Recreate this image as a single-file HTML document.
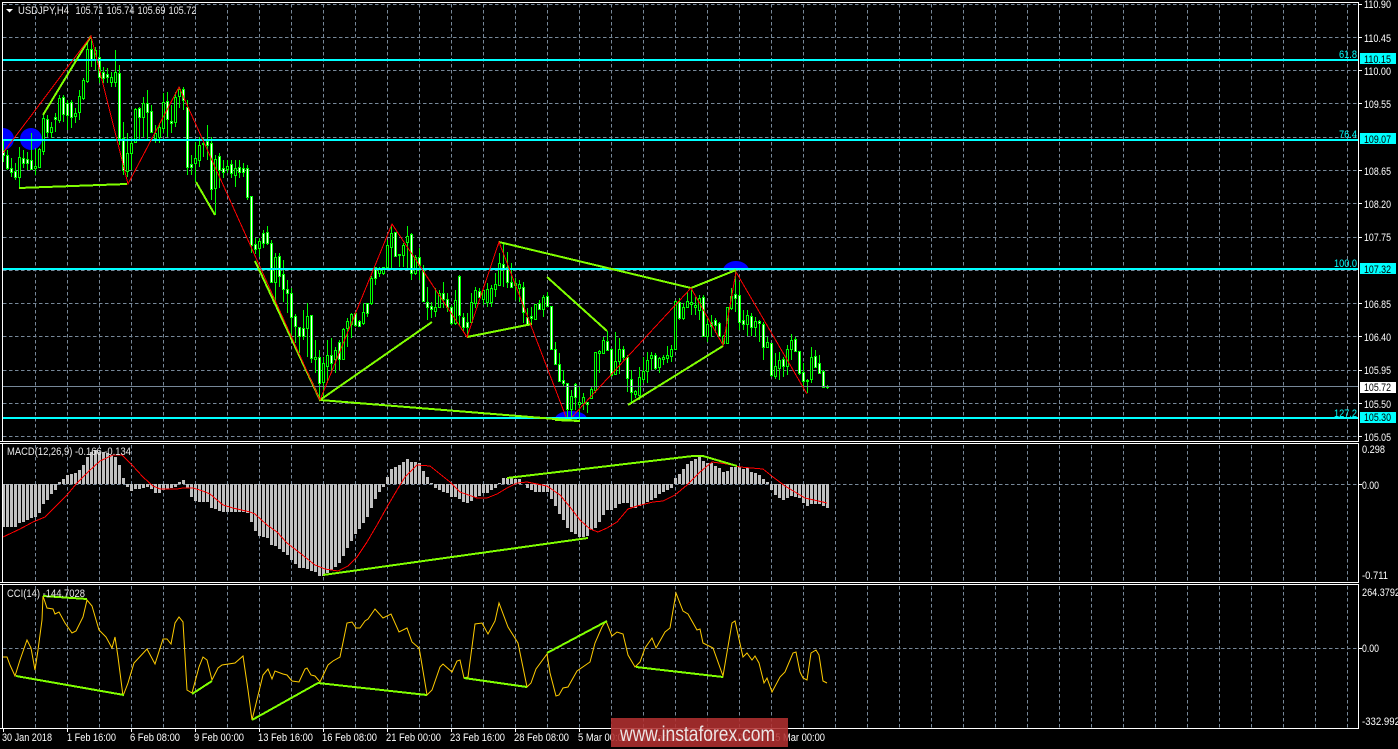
<!DOCTYPE html>
<html><head><meta charset="utf-8"><title>USDJPY,H4</title>
<style>
html,body{margin:0;padding:0;background:#000;width:1398px;height:749px;overflow:hidden}
svg{position:absolute;left:0;top:0;display:block}
text{font-family:"Liberation Sans",sans-serif;font-size:11px;fill:#fff}
.c{fill:#0ff}
.k{fill:#000}
.g{fill:#e8e8e8}
</style></head><body>
<svg width="1398" height="749" viewBox="0 0 1398 749" xmlns="http://www.w3.org/2000/svg">
<rect width="1398" height="749" fill="#000"/>
<!-- grid -->
<g stroke="#778899" fill="none" stroke-dasharray="3.5 2.5" shape-rendering="crispEdges">
<path d="M3 4.5H1358M3 37.5H1358M3 70.5H1358M3 103.5H1358M3 137.5H1358M3 170.5H1358M3 203.5H1358M3 237.5H1358M3 270.5H1358M3 303.5H1358M3 336.5H1358M3 370.5H1358M3 403.5H1358M3 436.5H1358M3 484.5H1358M3 648.5H1358"/>
<path d="M35.5 4V440M67.5 4V440M99.5 4V440M131.5 4V440M163.5 4V440M195.5 4V440M227.5 4V440M259.5 4V440M291.5 4V440M323.5 4V440M355.5 4V440M387.5 4V440M419.5 4V440M451.5 4V440M483.5 4V440M515.5 4V440M547.5 4V440M579.5 4V440M611.5 4V440M643.5 4V440M675.5 4V440M707.5 4V440M739.5 4V440M771.5 4V440M803.5 4V440M835.5 4V440M867.5 4V440M899.5 4V440M931.5 4V440M963.5 4V440M995.5 4V440M1027.5 4V440M1059.5 4V440M1091.5 4V440M1123.5 4V440M1155.5 4V440M1187.5 4V440M1219.5 4V440M1251.5 4V440M1283.5 4V440M1315.5 4V440M1347.5 4V440"/>
<path d="M35.5 445V582M67.5 445V582M99.5 445V582M131.5 445V582M163.5 445V582M195.5 445V582M227.5 445V582M259.5 445V582M291.5 445V582M323.5 445V582M355.5 445V582M387.5 445V582M419.5 445V582M451.5 445V582M483.5 445V582M515.5 445V582M547.5 445V582M579.5 445V582M611.5 445V582M643.5 445V582M675.5 445V582M707.5 445V582M739.5 445V582M771.5 445V582M803.5 445V582M835.5 445V582M867.5 445V582M899.5 445V582M931.5 445V582M963.5 445V582M995.5 445V582M1027.5 445V582M1059.5 445V582M1091.5 445V582M1123.5 445V582M1155.5 445V582M1187.5 445V582M1219.5 445V582M1251.5 445V582M1283.5 445V582M1315.5 445V582M1347.5 445V582"/>
<path d="M35.5 586V728M67.5 586V728M99.5 586V728M131.5 586V728M163.5 586V728M195.5 586V728M227.5 586V728M259.5 586V728M291.5 586V728M323.5 586V728M355.5 586V728M387.5 586V728M419.5 586V728M451.5 586V728M483.5 586V728M515.5 586V728M547.5 586V728M579.5 586V728M611.5 586V728M643.5 586V728M675.5 586V728M707.5 586V728M739.5 586V728M771.5 586V728M803.5 586V728M835.5 586V728M867.5 586V728M899.5 586V728M931.5 586V728M963.5 586V728M995.5 586V728M1027.5 586V728M1059.5 586V728M1091.5 586V728M1123.5 586V728M1155.5 586V728M1187.5 586V728M1219.5 586V728M1251.5 586V728M1283.5 586V728M1315.5 586V728M1347.5 586V728"/>
</g>
<!-- blue -->
<g fill="#00f">
<circle cx="31" cy="139" r="11"/>
<path d="M3 128A11 11 0 0 1 14 139A11 11 0 0 1 3 150Z"/>
<path d="M555 418C557 413 564 411 571 411C578 411 585 413 587 418Z"/>
<path d="M723 269C725 264 730 261 736 261C742 261 747 264 749 269Z"/>
</g>
<!-- wicks -->
<path fill="none" stroke="#0f0" shape-rendering="crispEdges" d="M3.5 140V162M7.5 150V170M11.5 158V177M15.5 163V180M19.5 147V188M23.5 150V168M27.5 152V170M31.5 133V170M35.5 148V175M39.5 148V168M43.5 115V155M47.5 115V137M51.5 122V138M55.5 113V132M59.5 95V123M63.5 95V122M67.5 100V130M71.5 100V128M75.5 108V123M79.5 90V120M83.5 78V100M87.5 43V83M91.5 37V67M95.5 47V70M99.5 50V83M103.5 67V83M107.5 68V83M111.5 72V87M115.5 50V87M119.5 65V145M123.5 122V175M127.5 133V177M131.5 138V170M135.5 108V143M139.5 107V140M143.5 97V137M147.5 90V140M151.5 105V133M155.5 125V143M159.5 123V143M163.5 93V133M167.5 92V137M171.5 105V133M175.5 92V127M179.5 87V108M183.5 87V110M187.5 100V175M191.5 155V175M195.5 142V182M199.5 137V167M203.5 138V157M207.5 125V160M211.5 137V200M215.5 155V215M219.5 153V188M223.5 160V178M227.5 160V173M231.5 160V178M235.5 160V187M239.5 160V178M243.5 163V177M247.5 165V200M251.5 196V253M255.5 238V254M259.5 238V257M263.5 230V248M267.5 226V245M271.5 240V283M275.5 253V305M279.5 253V287M283.5 260V302M287.5 280V313M291.5 288V338M295.5 314V343M299.5 327V353M303.5 310V340M307.5 303V357M311.5 315V363M315.5 340V373M319.5 350V400M323.5 357V398M327.5 340V383M331.5 338V373M335.5 347V373M339.5 340V370M343.5 328V360M347.5 318V347M351.5 313V338M355.5 312V327M359.5 320V327M363.5 303V325M367.5 303V317M371.5 276V305M375.5 267V285M379.5 267V277M383.5 267V275M387.5 240V267M391.5 225V268M395.5 232V256M399.5 254V267M403.5 243V267M407.5 226V270M411.5 233V280M415.5 255V275M419.5 248V280M423.5 265V302M427.5 287V320M431.5 302V318M435.5 288V317M439.5 290V308M443.5 282V308M447.5 293V312M451.5 305V325M455.5 290V325M459.5 275V325M463.5 313V332M467.5 313V335M471.5 293V323M475.5 287V308M479.5 288V298M483.5 290V305M487.5 283V307M491.5 285V307M495.5 273V297M499.5 253V285M503.5 243V287M507.5 252V288M511.5 263V288M515.5 278V300M519.5 280V302M523.5 282V323M527.5 308V325M531.5 307V325M535.5 304V320M539.5 300V310M543.5 295V317M547.5 292V307M551.5 306V350M555.5 342V365M559.5 353V382M563.5 370V387M567.5 383V417M571.5 390V420M575.5 383V410M579.5 387V417M583.5 393V410M587.5 402V413M591.5 387V398M595.5 352V393M599.5 350V373M603.5 337V353M607.5 331V350M611.5 348V377M615.5 332V375M619.5 338V374M623.5 346V360M627.5 355V392M631.5 370V402M635.5 390V398M639.5 367V400M643.5 357V383M647.5 352V383M651.5 352V370M655.5 353V370M659.5 357V373M663.5 355V365M667.5 346V363M671.5 345V362M675.5 300V350M679.5 298V320M683.5 303V320M687.5 292V308M691.5 290V315M695.5 297V315M699.5 295V320M703.5 295V337M707.5 317V342M711.5 315V337M715.5 318V333M719.5 322V337M723.5 335V345M727.5 307V344M731.5 288V310M735.5 270V312M739.5 282V330M743.5 310V330M747.5 310V336M751.5 313V336M755.5 317V337M759.5 320V342M763.5 322V360M767.5 337V348M771.5 343V377M775.5 353V379M779.5 352V380M783.5 357V377M787.5 345V375M791.5 334V360M795.5 337V352M799.5 351V375M803.5 363V389M807.5 379V393M811.5 347V383M815.5 350V368M819.5 355V373M823.5 370V388M827.5 385V389"/>
<!-- bull bodies -->
<path fill="#000" stroke="#0f0" shape-rendering="crispEdges" d="M18.5 157.5h2v20h-2zM34.5 166.5h2v2h-2zM38.5 149.5h2v18h-2zM42.5 118.5h2v33h-2zM50.5 127.5h2v5h-2zM58.5 98.5h2v22h-2zM74.5 113.5h2v3h-2zM78.5 96.5h2v16h-2zM82.5 80.5h2v18h-2zM86.5 49.5h2v32h-2zM94.5 50.5h2v10h-2zM110.5 77.5h2v5h-2zM114.5 72.5h2v10h-2zM126.5 153.5h2v18h-2zM130.5 143.5h2v10h-2zM134.5 109.5h2v33h-2zM142.5 103.5h2v14h-2zM154.5 133.5h2v5h-2zM158.5 127.5h2v10h-2zM162.5 102.5h2v26h-2zM174.5 97.5h2v25h-2zM178.5 89.5h2v7h-2zM194.5 158.5h2v5h-2zM198.5 145.5h2v15h-2zM202.5 143.5h2v1h-2zM214.5 159.5h2v29h-2zM226.5 166.5h2v3h-2zM234.5 168.5h2v7h-2zM258.5 241.5h2v7h-2zM274.5 257.5h2v25h-2zM306.5 316.5h2v12h-2zM314.5 357.5h2v2h-2zM322.5 363.5h2v19h-2zM326.5 355.5h2v11h-2zM334.5 350.5h2v9h-2zM342.5 329.5h2v30h-2zM346.5 321.5h2v7h-2zM350.5 314.5h2v10h-2zM362.5 312.5h2v11h-2zM370.5 278.5h2v25h-2zM378.5 269.5h2v4h-2zM382.5 267.5h2v6h-2zM386.5 245.5h2v22h-2zM390.5 233.5h2v14h-2zM402.5 245.5h2v10h-2zM406.5 236.5h2v6h-2zM414.5 257.5h2v16h-2zM434.5 307.5h2v4h-2zM438.5 293.5h2v14h-2zM454.5 300.5h2v23h-2zM470.5 302.5h2v20h-2zM474.5 290.5h2v13h-2zM482.5 290.5h2v9h-2zM486.5 289.5h2v13h-2zM490.5 288.5h2v14h-2zM494.5 284.5h2v5h-2zM498.5 263.5h2v22h-2zM514.5 283.5h2v2h-2zM518.5 284.5h2v4h-2zM534.5 304.5h2v15h-2zM542.5 297.5h2v12h-2zM570.5 396.5h2v13h-2zM578.5 402.5h2v2h-2zM582.5 397.5h2v6h-2zM590.5 389.5h2v9h-2zM594.5 352.5h2v38h-2zM598.5 351.5h2v2h-2zM602.5 340.5h2v13h-2zM614.5 361.5h2v13h-2zM618.5 349.5h2v12h-2zM634.5 391.5h2v3h-2zM638.5 377.5h2v18h-2zM642.5 371.5h2v8h-2zM646.5 360.5h2v11h-2zM650.5 355.5h2v3h-2zM658.5 358.5h2v9h-2zM662.5 357.5h2v2h-2zM666.5 355.5h2v3h-2zM670.5 349.5h2v7h-2zM674.5 301.5h2v48h-2zM682.5 307.5h2v11h-2zM686.5 301.5h2v6h-2zM690.5 302.5h2v2h-2zM694.5 305.5h2v2h-2zM698.5 298.5h2v12h-2zM706.5 324.5h2v12h-2zM722.5 336.5h2v7h-2zM726.5 307.5h2v36h-2zM730.5 296.5h2v12h-2zM746.5 315.5h2v9h-2zM754.5 321.5h2v6h-2zM766.5 342.5h2v5h-2zM774.5 366.5h2v10h-2zM778.5 360.5h2v8h-2zM786.5 349.5h2v17h-2zM790.5 340.5h2v9h-2zM810.5 357.5h2v22h-2z"/>
<!-- bear bodies -->
<path fill="#fff" stroke="#0f0" shape-rendering="crispEdges" d="M2.5 150.5h2v5h-2zM6.5 155.5h2v13h-2zM10.5 168.5h2v4h-2zM14.5 171.5h2v6h-2zM22.5 158.5h2v5h-2zM26.5 159.5h2v4h-2zM30.5 160.5h2v9h-2zM46.5 119.5h2v13h-2zM54.5 117.5h2v2h-2zM62.5 97.5h2v17h-2zM66.5 103.5h2v12h-2zM70.5 102.5h2v15h-2zM90.5 49.5h2v11h-2zM98.5 57.5h2v20h-2zM102.5 72.5h2v6h-2zM106.5 74.5h2v3h-2zM118.5 73.5h2v65h-2zM122.5 138.5h2v32h-2zM138.5 108.5h2v9h-2zM146.5 103.5h2v9h-2zM150.5 111.5h2v21h-2zM166.5 101.5h2v18h-2zM170.5 121.5h2v2h-2zM182.5 89.5h2v11h-2zM186.5 107.5h2v60h-2zM190.5 164.5h2v3h-2zM206.5 141.5h2v4h-2zM210.5 143.5h2v46h-2zM218.5 156.5h2v14h-2zM222.5 168.5h2v4h-2zM230.5 164.5h2v9h-2zM238.5 167.5h2v5h-2zM242.5 168.5h2v4h-2zM246.5 168.5h2v29h-2zM250.5 196.5h2v49h-2zM254.5 244.5h2v5h-2zM262.5 233.5h2v10h-2zM266.5 232.5h2v11h-2zM270.5 243.5h2v39h-2zM278.5 256.5h2v20h-2zM282.5 274.5h2v15h-2zM286.5 289.5h2v4h-2zM290.5 293.5h2v24h-2zM294.5 316.5h2v10h-2zM298.5 327.5h2v9h-2zM302.5 328.5h2v8h-2zM310.5 315.5h2v43h-2zM318.5 357.5h2v26h-2zM330.5 355.5h2v8h-2zM338.5 342.5h2v17h-2zM354.5 313.5h2v12h-2zM358.5 321.5h2v5h-2zM366.5 303.5h2v10h-2zM374.5 267.5h2v11h-2zM394.5 232.5h2v24h-2zM398.5 254.5h2v1h-2zM410.5 234.5h2v39h-2zM418.5 257.5h2v8h-2zM422.5 268.5h2v33h-2zM426.5 302.5h2v5h-2zM430.5 306.5h2v3h-2zM442.5 293.5h2v6h-2zM446.5 299.5h2v8h-2zM450.5 307.5h2v16h-2zM458.5 276.5h2v39h-2zM462.5 317.5h2v10h-2zM466.5 322.5h2v5h-2zM478.5 291.5h2v6h-2zM502.5 264.5h2v4h-2zM506.5 267.5h2v15h-2zM510.5 282.5h2v5h-2zM522.5 287.5h2v25h-2zM526.5 317.5h2v8h-2zM530.5 316.5h2v2h-2zM538.5 303.5h2v6h-2zM546.5 296.5h2v10h-2zM550.5 306.5h2v43h-2zM554.5 349.5h2v15h-2zM558.5 364.5h2v17h-2zM562.5 380.5h2v3h-2zM566.5 383.5h2v26h-2zM574.5 384.5h2v13h-2zM586.5 402.5h2v2h-2zM606.5 341.5h2v9h-2zM610.5 349.5h2v26h-2zM622.5 349.5h2v8h-2zM626.5 357.5h2v21h-2zM630.5 379.5h2v13h-2zM654.5 355.5h2v13h-2zM678.5 302.5h2v16h-2zM702.5 297.5h2v39h-2zM710.5 322.5h2v4h-2zM714.5 320.5h2v5h-2zM718.5 323.5h2v13h-2zM734.5 294.5h2v4h-2zM738.5 295.5h2v27h-2zM742.5 320.5h2v4h-2zM750.5 316.5h2v11h-2zM758.5 321.5h2v2h-2zM762.5 324.5h2v23h-2zM770.5 343.5h2v32h-2zM782.5 359.5h2v7h-2zM794.5 339.5h2v12h-2zM798.5 351.5h2v22h-2zM802.5 372.5h2v9h-2zM806.5 380.5h2v1h-2zM814.5 356.5h2v11h-2zM818.5 363.5h2v10h-2zM822.5 371.5h2v16h-2zM826.5 386.5h2v1h-2z"/>
<!-- levels -->
<g shape-rendering="crispEdges">
<path d="M3 386.5H1358" stroke="#778899" fill="none"/>
<path d="M3 60H1358M3 140H1358M3 269H1358M3 418H1358" stroke="#0ff" stroke-width="2" fill="none"/>
</g>
<!-- main green -->
<g fill="none" stroke="#80ff00" stroke-width="2" shape-rendering="crispEdges">
<path d="M19 188L127 184"/>
<path d="M43 115L91 36"/>
<path d="M196 182L215 215"/>
<path d="M255 261L320 400L432 322"/>
<path d="M320 400L580 421L555 420"/>
<path d="M467 337L532 324"/>
<path d="M499 242L691 288L736 270"/>
<path d="M547 277L607 331"/>
<path d="M628 405L723 346"/>
</g>
<!-- main red -->
<path fill="none" stroke="#f00" shape-rendering="crispEdges" d="M3 153L91 36L128 184L179 87L320 400L392 224L467 337L499 242L566 417M572 417L691 288L723 345L736 272L807 394"/>
<!-- MACD hist -->
<path fill="none" stroke="#c0c0c0" stroke-width="3" shape-rendering="crispEdges" d="M3.5 484V527M7.5 484V527M11.5 484V527M15.5 484V527M19.5 484V523M23.5 484V522M27.5 484V520M31.5 484V518M35.5 484V517M39.5 484V513M43.5 484V504M47.5 484V500M51.5 484V494M55.5 484V490M59.5 484V482M63.5 484V479M67.5 484V475M71.5 484V474M75.5 484V473M79.5 484V470M83.5 484V465M87.5 484V457M91.5 484V452M95.5 484V450M99.5 484V452M103.5 484V452M107.5 484V453M111.5 484V455M115.5 484V457M119.5 484V465M123.5 484V478M127.5 484V487M131.5 484V491M135.5 484V489M139.5 484V489M143.5 484V488M147.5 484V487M151.5 484V489M155.5 484V493M159.5 484V493M163.5 484V490M167.5 484V489M171.5 484V488M175.5 484V487M179.5 484V482M183.5 484V480M187.5 484V488M191.5 484V497M195.5 484V501M199.5 484V502M203.5 484V502M207.5 484V502M211.5 484V508M215.5 484V509M219.5 484V511M223.5 484V512M227.5 484V512M231.5 484V512M235.5 484V512M239.5 484V512M243.5 484V512M247.5 484V513M251.5 484V522M255.5 484V531M259.5 484V536M263.5 484V537M267.5 484V538M271.5 484V545M275.5 484V546M279.5 484V549M283.5 484V552M287.5 484V555M291.5 484V560M295.5 484V564M299.5 484V568M303.5 484V568M307.5 484V569M311.5 484V571M315.5 484V572M319.5 484V576M323.5 484V576M327.5 484V573M331.5 484V570M335.5 484V567M339.5 484V563M343.5 484V556M347.5 484V548M351.5 484V541M355.5 484V534M359.5 484V529M363.5 484V523M367.5 484V517M371.5 484V508M375.5 484V499M379.5 484V492M383.5 484V487M387.5 484V477M391.5 484V469M395.5 484V467M399.5 484V465M403.5 484V462M407.5 484V459M411.5 484V462M415.5 484V462M419.5 484V463M423.5 484V471M427.5 484V477M431.5 484V483M435.5 484V488M439.5 484V490M443.5 484V492M447.5 484V493M451.5 484V497M455.5 484V497M459.5 484V499M463.5 484V502M467.5 484V503M471.5 484V501M475.5 484V497M479.5 484V496M483.5 484V493M487.5 484V493M491.5 484V490M495.5 484V488M499.5 484V483M503.5 484V478M507.5 484V478M511.5 484V478M515.5 484V479M519.5 484V479M523.5 484V484M527.5 484V488M531.5 484V490M535.5 484V492M539.5 484V492M543.5 484V492M547.5 484V492M551.5 484V499M555.5 484V506M559.5 484V514M563.5 484V520M567.5 484V528M571.5 484V532M575.5 484V534M579.5 484V537M583.5 484V537M587.5 484V536M591.5 484V530M595.5 484V528M599.5 484V522M603.5 484V515M607.5 484V510M611.5 484V510M615.5 484V508M619.5 484V504M623.5 484V503M627.5 484V503M631.5 484V507M635.5 484V508M639.5 484V506M643.5 484V504M647.5 484V502M651.5 484V500M655.5 484V498M659.5 484V494M663.5 484V492M667.5 484V490M671.5 484V488M675.5 484V478M679.5 484V474M683.5 484V469M687.5 484V464M691.5 484V461M695.5 484V459M699.5 484V457M703.5 484V461M707.5 484V463M711.5 484V463M715.5 484V466M719.5 484V468M723.5 484V472M727.5 484V471M731.5 484V467M735.5 484V467M739.5 484V467M743.5 484V469M747.5 484V468M751.5 484V472M755.5 484V473M759.5 484V475M763.5 484V479M767.5 484V482M771.5 484V490M775.5 484V495M779.5 484V498M783.5 484V500M787.5 484V498M791.5 484V496M795.5 484V497M799.5 484V498M803.5 484V503M807.5 484V506M811.5 484V504M815.5 484V504M819.5 484V504M823.5 484V506M827.5 484V508"/>
<path fill="none" stroke="#f00" shape-rendering="crispEdges" d="M3 537L20 529L33 522L45 517L55 507L67 495L77 483L88 472L100 461L113 455L122 455L132 465L143 477L153 486L160 489L177 489L183 488L193 488L203 491L210 494L223 505L233 508L250 512L255 514L267 525L277 532L287 543L300 553L315 565L325 569L338 571L348 566L357 557L367 542L377 525L387 507L397 490L405 477L417 465L430 466L440 474L450 482L460 492L477 498L487 498L497 494L507 488L517 483L527 482L547 486L560 495L570 507L580 520L590 529L598 532L607 528L617 522L628 509L637 506L653 502L663 501L675 495L687 485L700 472L712 462L727 464L740 467L763 469L773 477L785 486L795 492L805 498L827 503"/>
<g fill="none" stroke="#80ff00" stroke-width="2" shape-rendering="crispEdges">
<path d="M323 575L588 538"/>
<path d="M507 478L693 456L703 456L737 466"/>
</g>
<!-- CCI -->
<path fill="none" stroke="#fc0" d="M3 657L7 657L10 665L15 676L20 660L27 640L31 648L35 670L38 650L42 620L43 596L47 608L53 609L55 614L59 612L65 623L72 633L76 631L83 617L87 600L92 606L99 630L106 637L112 648L115 637L118 657L123 696L128 683L134 663L147 649L155 664L163 639L167 639L171 644L175 623L179 617L183 622L187 690L192 693L199 667L203 657L207 660L212 680L218 668L222 665L235 663L243 656L248 690L252 720L263 675L268 669L272 679L275 671L283 674L287 675L292 681L299 682L305 669L307 668L311 675L315 676L320 682L328 665L333 661L340 657L347 623L352 622L356 628L360 628L365 621L368 619L375 609L383 618L391 614L399 632L407 628L412 642L419 648L420 653L427 695L432 690L440 667L443 664L452 672L457 661L460 660L464 678L468 677L475 624L482 623L488 634L495 621L499 603L508 627L518 643L527 687L531 683L536 669L547 654L550 673L556 696L559 695L563 688L568 687L577 671L590 662L595 643L602 627L606 621L612 636L617 632L623 634L628 655L635 667L640 662L645 648L652 638L656 648L665 632L670 628L676 593L683 611L688 614L697 630L700 629L703 643L713 648L723 676L732 623L735 621L743 657L747 653L752 660L755 656L759 663L764 683L767 678L772 692L780 677L785 672L793 653L796 652L800 672L803 678L807 680L811 653L816 650L819 655L823 681L827 683"/>
<g fill="none" stroke="#80ff00" stroke-width="2" shape-rendering="crispEdges">
<path d="M43 596L87 599"/>
<path d="M16 676L124 695"/>
<path d="M192 694L212 681"/>
<path d="M252 720L318 683L427 695"/>
<path d="M464 678L527 687"/>
<path d="M547 653L607 621"/>
<path d="M636 667L723 677"/>
</g>
<!-- frames -->
<g fill="none" stroke="#fff" shape-rendering="crispEdges">
<path d="M2.5 441.5V2.5H1358.5V441.5"/>
<path d="M0 441.5H1359"/>
<path d="M0 443.5H1359M2.5 443.5V582.5M1358.5 443.5V582.5M0 582.5H1359"/>
<path d="M0 584.5H1359M2.5 584.5V728.5M1358.5 584.5V728.5M0 728.5H1359"/>
<path d="M1359 4.5h3M1359 37.5h3M1359 70.5h3M1359 103.5h3M1359 170.5h3M1359 203.5h3M1359 237.5h3M1359 303.5h3M1359 336.5h3M1359 370.5h3M1359 403.5h3M1359 436.5h3M1359 484.5h3M1359 648.5h3"/>
<path d="M3.5 729v3M67.5 729v3M131.5 729v3M195.5 729v3M259.5 729v3M323.5 729v3M387.5 729v3M451.5 729v3M515.5 729v3M579.5 729v3M643.5 729v3M707.5 729v3M771.5 729v3"/>
</g>
<!-- title -->
<path d="M6 9h7l-3.5 3.5z" fill="#fff"/>
<text class="g" x="18" y="14" textLength="51" lengthAdjust="spacingAndGlyphs">USDJPY,H4</text>
<text class="g" x="75.5" y="14" textLength="28" lengthAdjust="spacingAndGlyphs">105.71</text>
<text class="g" x="106.5" y="14" textLength="28" lengthAdjust="spacingAndGlyphs">105.74</text>
<text class="g" x="137.5" y="14" textLength="28" lengthAdjust="spacingAndGlyphs">105.69</text>
<text class="g" x="168.5" y="14" textLength="28" lengthAdjust="spacingAndGlyphs">105.72</text>
<text class="g" x="7" y="455" textLength="124" lengthAdjust="spacingAndGlyphs">MACD(12,26,9) -0.166 -0.134</text>
<text class="g" x="7" y="597" textLength="78" lengthAdjust="spacingAndGlyphs">CCI(14) -144.7028</text>
<!-- level labels -->
<text class="c" x="1339" y="58" textLength="18" lengthAdjust="spacingAndGlyphs">61.8</text>
<text class="c" x="1339" y="138" textLength="18" lengthAdjust="spacingAndGlyphs">76.4</text>
<text class="c" x="1334" y="267" textLength="23" lengthAdjust="spacingAndGlyphs">100.0</text>
<text class="c" x="1334" y="417" textLength="23" lengthAdjust="spacingAndGlyphs">127.2</text>
<!-- price boxes -->
<rect x="1360" y="53" width="36" height="11" fill="#0ff"/>
<rect x="1360" y="133" width="36" height="11" fill="#0ff"/>
<rect x="1360" y="263" width="36" height="11" fill="#0ff"/>
<rect x="1360" y="382" width="36" height="11" fill="#fff"/>
<rect x="1360" y="412" width="36" height="11" fill="#0ff"/>
<!-- price axis -->
<g>
<text x="1364" y="8" textLength="27" lengthAdjust="spacingAndGlyphs">110.90</text>
<text x="1364" y="42" textLength="27" lengthAdjust="spacingAndGlyphs">110.45</text>
<text class="k" x="1364" y="63" textLength="27" lengthAdjust="spacingAndGlyphs">110.15</text>
<text x="1364" y="75" textLength="27" lengthAdjust="spacingAndGlyphs">110.00</text>
<text x="1364" y="108" textLength="27" lengthAdjust="spacingAndGlyphs">109.55</text>
<text class="k" x="1364" y="143" textLength="27" lengthAdjust="spacingAndGlyphs">109.07</text>
<text x="1364" y="175" textLength="27" lengthAdjust="spacingAndGlyphs">108.65</text>
<text x="1364" y="208" textLength="27" lengthAdjust="spacingAndGlyphs">108.20</text>
<text x="1364" y="241" textLength="27" lengthAdjust="spacingAndGlyphs">107.75</text>
<text class="k" x="1364" y="273" textLength="27" lengthAdjust="spacingAndGlyphs">107.32</text>
<text x="1364" y="308" textLength="27" lengthAdjust="spacingAndGlyphs">106.85</text>
<text x="1364" y="341" textLength="27" lengthAdjust="spacingAndGlyphs">106.40</text>
<text x="1364" y="374" textLength="27" lengthAdjust="spacingAndGlyphs">105.95</text>
<text class="k" x="1364" y="391" textLength="27" lengthAdjust="spacingAndGlyphs">105.72</text>
<text x="1364" y="408" textLength="27" lengthAdjust="spacingAndGlyphs">105.50</text>
<text class="k" x="1364" y="421" textLength="27" lengthAdjust="spacingAndGlyphs">105.30</text>
<text x="1364" y="441" textLength="27" lengthAdjust="spacingAndGlyphs">105.05</text>
<text x="1362" y="453" textLength="23" lengthAdjust="spacingAndGlyphs">0.298</text>
<text x="1362" y="489" textLength="17" lengthAdjust="spacingAndGlyphs">0.00</text>
<text x="1362" y="579" textLength="26" lengthAdjust="spacingAndGlyphs">-0.711</text>
<text x="1362" y="596" textLength="38" lengthAdjust="spacingAndGlyphs">264.3792</text>
<text x="1362" y="652" textLength="17" lengthAdjust="spacingAndGlyphs">0.00</text>
<text x="1362" y="725" textLength="38" lengthAdjust="spacingAndGlyphs">-332.992</text>
</g>
<!-- time axis -->
<g>
<text x="2" y="741" textLength="50" lengthAdjust="spacingAndGlyphs">30 Jan 2018</text>
<text x="67" y="741" textLength="49" lengthAdjust="spacingAndGlyphs">1 Feb 16:00</text>
<text x="130" y="741" textLength="50" lengthAdjust="spacingAndGlyphs">6 Feb 08:00</text>
<text x="194" y="741" textLength="50" lengthAdjust="spacingAndGlyphs">9 Feb 00:00</text>
<text x="258" y="741" textLength="55" lengthAdjust="spacingAndGlyphs">13 Feb 16:00</text>
<text x="322" y="741" textLength="55" lengthAdjust="spacingAndGlyphs">16 Feb 08:00</text>
<text x="386" y="741" textLength="55" lengthAdjust="spacingAndGlyphs">21 Feb 00:00</text>
<text x="450" y="741" textLength="55" lengthAdjust="spacingAndGlyphs">23 Feb 16:00</text>
<text x="514" y="741" textLength="55" lengthAdjust="spacingAndGlyphs">28 Feb 08:00</text>
<text x="578" y="741" textLength="50" lengthAdjust="spacingAndGlyphs">5 Mar 00:00</text>
<text x="642" y="741" textLength="50" lengthAdjust="spacingAndGlyphs">7 Mar 16:00</text>
<text x="706" y="741" textLength="55" lengthAdjust="spacingAndGlyphs">12 Mar 08:00</text>
<text x="770" y="741" textLength="55" lengthAdjust="spacingAndGlyphs">15 Mar 00:00</text>
</g>
<!-- watermark -->
<rect x="611" y="718" width="177" height="29" fill="#b03030" fill-opacity=".88"/>
<text x="620" y="741" style="font-size:21px;fill:#ece4e4" textLength="155" lengthAdjust="spacingAndGlyphs">www.instaforex.com</text>
</svg>
</body></html>
